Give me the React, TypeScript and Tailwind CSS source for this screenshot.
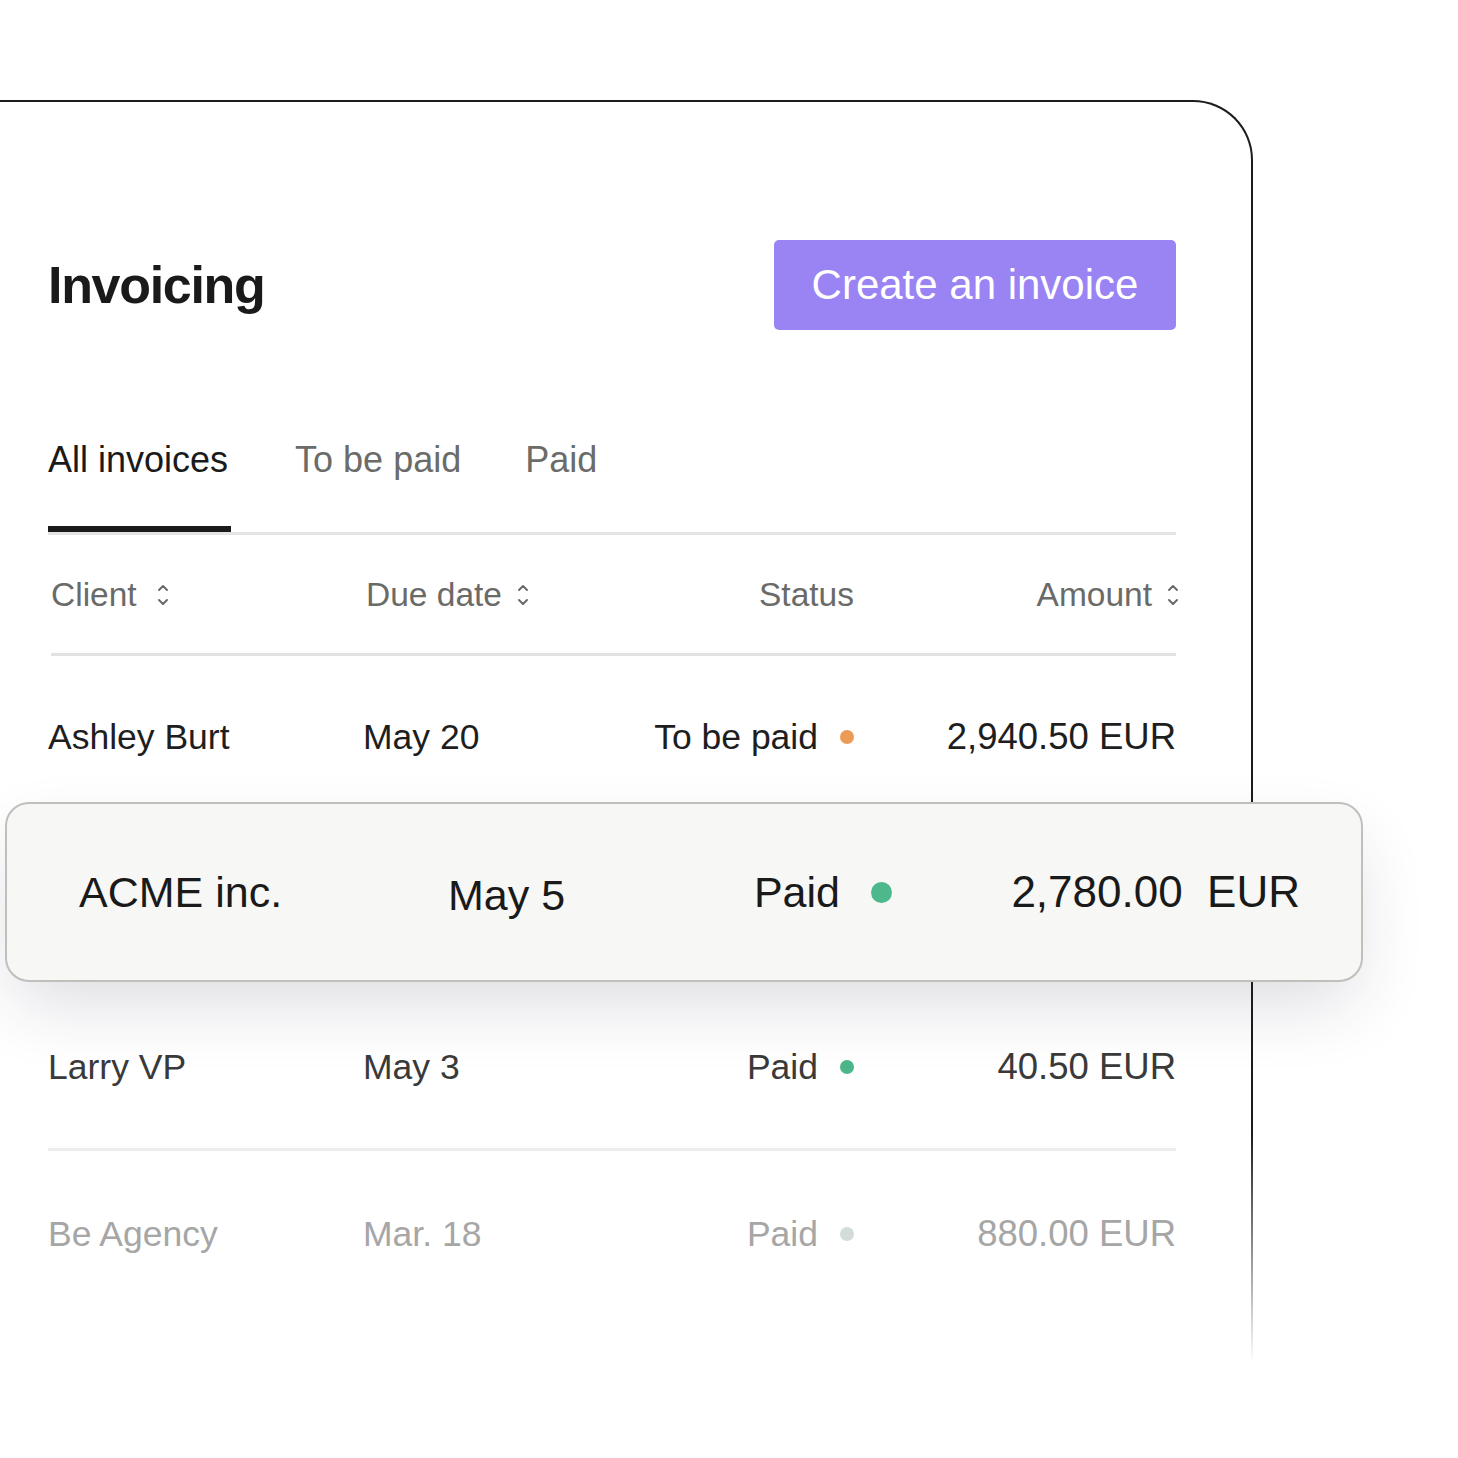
import React from "react";

const font = { fontFamily: '"Liberation Sans", Arial, sans-serif' };

function SortIcon({ className = "" }: { className?: string }) {
  return (
    <svg width="12" height="28" viewBox="0 0 12 28" className={className} fill="none">
      <path d="M2 9 L6 5 L10 9" stroke="#6a6a68" strokeWidth="2" strokeLinecap="round" strokeLinejoin="round" />
      <path d="M2 19 L6 23 L10 19" stroke="#6a6a68" strokeWidth="2" strokeLinecap="round" strokeLinejoin="round" />
    </svg>
  );
}

type Row = {
  client: string;
  date: string;
  status: string;
  dot: string;
  amount: string;
  text: string;
};

function NormalRow({ r, last }: { r: Row; last?: boolean }) {
  return (
    <div
      className={`flex h-[165px] items-center text-[35.5px] leading-[40px] ${r.text} ${
        last ? "" : "border-b-[3px] border-[#ededeb]"
      }`}
    >
      <div className="w-[315px]">{r.client}</div>
      <div className="w-[240px]">{r.date}</div>
      <div className="flex w-[251px] items-center justify-end gap-[22px]">
        <span>{r.status}</span>
        <span className={`h-[14px] w-[14px] rounded-full ${r.dot}`} />
      </div>
      <div className="flex-1 text-right text-[36.5px]">{r.amount}</div>
    </div>
  );
}

export default function App() {
  return (
    <div className="relative h-[1458px] w-[1458px] overflow-hidden bg-white" style={font}>
      <div className="relative mt-[100px] w-[1253px] rounded-tr-[60px] border-t-2 border-r-2 border-[#1c1c1c] pl-[48px] pr-[75px] pt-[138px] pb-[47px]">
        {/* header */}
        <div className="flex h-[90px] items-center justify-between">
          <h1 className="text-[52px] font-bold leading-none tracking-[-0.025em] text-[#1a1a1a]">Invoicing</h1>
          <button className="flex h-[90px] w-[402px] items-center justify-center rounded-[5px] bg-[#9a83f3] text-[42px] leading-none text-white">
            Create an invoice
          </button>
        </div>

        {/* tabs */}
        <div className="mt-[108px] flex gap-[64px] border-b-[3px] border-[#e4e4e2] text-[36px] leading-[44px]">
          <div className="relative pb-[50px] pr-[3px] text-[#1a1a1a]">
            All invoices
            <span className="absolute bottom-0 left-0 right-0 h-[6px] bg-[#1a1a1a]" />
          </div>
          <div className="pb-[50px] text-[#6b6b69]">To be paid</div>
          <div className="pb-[50px] text-[#6b6b69]">Paid</div>
        </div>

        {/* column headers */}
        <div className="ml-[3px] flex items-center border-b-[3px] border-[#e2e2e0] pt-[40px] pb-[38px] text-[33.5px] leading-[40px] text-[#6a6a68]">
          <div className="flex w-[315px] items-center gap-[20px]">
            <span>Client</span>
            <SortIcon />
          </div>
          <div className="flex w-[240px] items-center gap-[15px]">
            <span>Due date</span>
            <SortIcon />
          </div>
          <div className="w-[248px] text-right">Status</div>
          <div className="flex flex-1 items-center justify-end gap-[15px]">
            <span>Amount</span>
            <SortIcon className="-mr-[3px]" />
          </div>
        </div>

        {/* rows */}
        <NormalRow
          r={{
            client: "Ashley Burt",
            date: "May 20",
            status: "To be paid",
            dot: "bg-[#eb9b55]",
            amount: "2,940.50 EUR",
            text: "text-[#1e1e1e]",
          }}
        />
        <div className="relative h-[165px]">
          <div className="absolute left-[-43px] top-[-19px] z-10 flex h-[180px] w-[1358px] items-center rounded-[24px] border-2 border-[#bfbfbc] bg-[#f7f7f5] pl-[72px] pr-[61px] text-[43px] leading-[48px] text-[#1a1a1a] shadow-[0_30px_70px_-10px_rgba(40,40,70,0.16)]">
            <div className="w-[369px]">ACME inc.</div>
            <div className="w-[190px] pt-[6px]">May 5</div>
            <div className="flex w-[254px] items-center justify-end gap-[31px]">
              <span>Paid</span>
              <span className="h-[21px] w-[21px] rounded-full bg-[#4db88b]" />
            </div>
            <div className="flex-1 whitespace-pre text-right text-[44px]">{"2,780.00  EUR"}</div>
          </div>
        </div>
        <NormalRow
          r={{
            client: "Larry VP",
            date: "May 3",
            status: "Paid",
            dot: "bg-[#4cb58a]",
            amount: "40.50 EUR",
            text: "text-[#3a3a3a]",
          }}
        />
        <NormalRow
          last
          r={{
            client: "Be Agency",
            date: "Mar. 18",
            status: "Paid",
            dot: "bg-[#d3dcd7]",
            amount: "880.00 EUR",
            text: "text-[#a6a6a6]",
          }}
        />

        {/* fade of the right border */}
        <div className="absolute bottom-0 right-[-6px] h-[230px] w-[12px] bg-gradient-to-b from-white/0 to-white" />
      </div>
    </div>
  );
}
